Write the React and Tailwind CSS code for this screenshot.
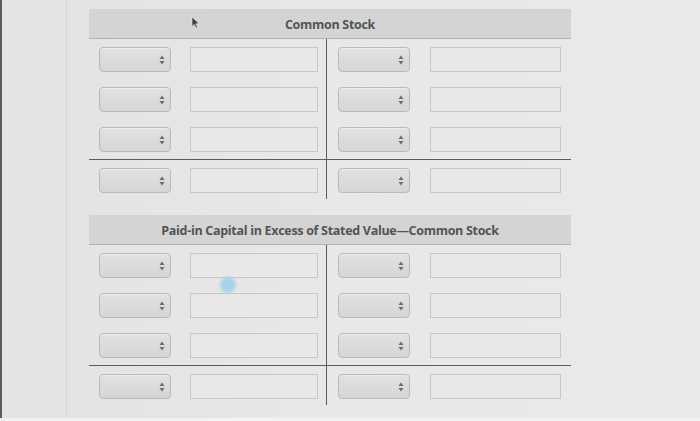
import React from "react";

const Spinner = () => (
  <svg width="6" height="10" viewBox="0 0 6 10" className="shrink-0">
    <path d="M3 0.5 L5.5 4 L0.5 4 Z" fill="#6b6d6f" />
    <path d="M3 9.5 L5.5 6 L0.5 6 Z" fill="#6b6d6f" />
  </svg>
);

const Select = () => (
  <div className="w-[72px] h-[25px] rounded-[4px] border border-[#b9bab9] bg-gradient-to-b from-[#e1e2e1] to-[#d4d5d4] flex items-center justify-end pr-[5px] shadow-[inset_0_1px_0_#ececec]">
    <Spinner />
  </div>
);

const Input = ({ w }) => (
  <div className={`h-[25px] border border-[#c6c7c6] bg-[#e8e9e7] ${w}`} />
);

const Row = ({ right }) => (
  <div className={`flex items-center ${right ? "pl-[11px] gap-[20px]" : "pl-[10px] gap-[19px]"}`}>
    <Select />
    <Input w={right ? "w-[131px]" : "w-[128px]"} />
  </div>
);

const Section = ({ rows, pb }) => (
  <div className="grid grid-cols-[238px_244px]">
    <div className={`border-r border-[#5c5d5e] pt-[8px] ${pb} flex flex-col gap-[15px]`}>
      {Array.from({ length: rows }).map((_, i) => (
        <Row key={i} />
      ))}
    </div>
    <div className={`pt-[8px] ${pb} flex flex-col gap-[15px]`}>
      {Array.from({ length: rows }).map((_, i) => (
        <Row key={i} right />
      ))}
    </div>
  </div>
);

const TAccount = ({ title }) => (
  <div className="w-[482px]">
    <div className="h-[30px] pt-[3px] bg-[#d3d4d3] border-b border-[#b0b1b0] flex items-center justify-center">
      <span className="text-[12.5px] font-bold text-[#525457] tracking-[-0.3px]">{title}</span>
    </div>
    <div className="border-b border-[#5c5d5e]">
      <Section rows={3} pb="pb-[7px]" />
    </div>
    <Section rows={1} pb="pb-[6px]" />
  </div>
);

const App = () => {
  return (
    <div
      className="relative w-[700px] h-[421px] overflow-hidden flex bg-gradient-to-r from-[#e3e4e2] via-[#e8e9e7] to-[#eaebe9]"
      style={{ fontFamily: '"Open Sans", "Liberation Sans", sans-serif' }}
    >
      <div className="w-[2px] bg-[#5a5b5c] shrink-0" />
      <div className="w-[65px] border-r border-[#d3d4d2] shrink-0" />
      <div className="pl-[22px] pt-[9px] flex flex-col gap-[16px]">
        <TAccount title="Common Stock" />
        <TAccount title="Paid-in Capital in Excess of Stated Value—Common Stock" />
      </div>

      {/* mouse pointer */}
      <svg className="absolute left-[191px] top-[16px]" width="9" height="13" viewBox="0 0 9 13">
        <path d="M1 1 L1 10.5 L3.3 8.4 L5 12 L6.4 11.3 L4.8 7.8 L8 7.6 Z" fill="#3d3e40" stroke="#e6e6e6" strokeWidth="0.6" />
      </svg>

      {/* blue touch dot */}
      <div className="absolute left-[220px] top-[277px] w-[16px] h-[16px] rounded-full bg-[#9fd3ea] blur-[1.5px] opacity-90" />

      <div className="absolute left-0 right-0 bottom-0 h-[3px] bg-[#f2f2f1]" />
    </div>
  );
};

export default App;
